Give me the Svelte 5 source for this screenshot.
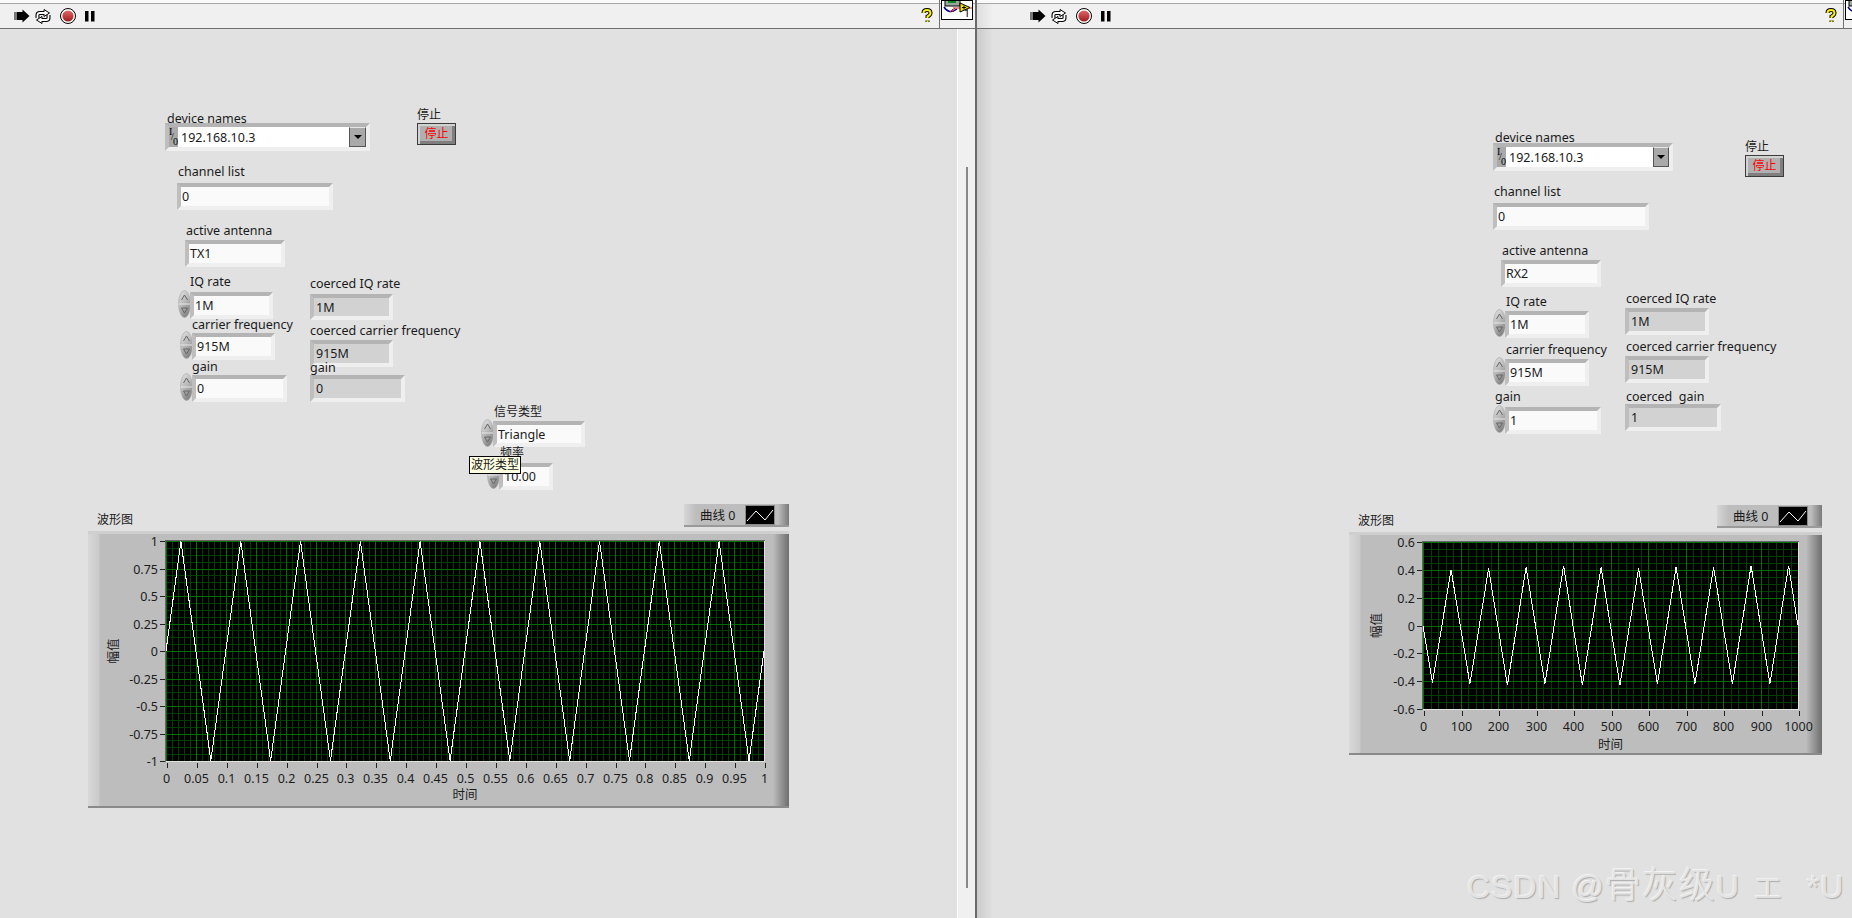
<script>
  const HEAD = 29;
  const leftOrigin = 0;
  const rightOrigin = 977;

  const leftFields = [
    { label: 'channel list', lx: 178, ly: 163, x: 177, y: 183, w: 156, h: 27, value: '0' },
    { label: 'active antenna', lx: 186, ly: 222, x: 185, y: 240, w: 100, h: 27, value: 'TX1' },
    { label: 'IQ rate', lx: 190, ly: 273, x: 190, y: 292, w: 83, h: 27, value: '1M', spin: true },
    { label: 'carrier frequency', lx: 192, ly: 316, x: 192, y: 333, w: 83, h: 27, value: '915M', spin: true },
    { label: 'gain', lx: 192, ly: 358, x: 192, y: 375, w: 95, h: 27, value: '0', spin: true },
    { label: 'coerced IQ rate', lx: 310, ly: 275, x: 310, y: 294, w: 83, h: 26, value: '1M', ind: true },
    { label: 'coerced carrier frequency', lx: 310, ly: 322, x: 310, y: 340, w: 83, h: 27, value: '915M', ind: true },
    { label: 'gain', lx: 310, ly: 359, x: 310, y: 375, w: 95, h: 27, value: '0', ind: true },
    { label: '信号类型', lx: 494, ly: 403, x: 493, y: 421, w: 92, h: 26, value: 'Triangle', spin: true },
    { label: '频率', lx: 500, ly: 444, x: 499, y: 463, w: 54, h: 27, value: '10.00', spin: true }
  ];
  const rightFields = [
    { label: 'channel list', lx: 1494, ly: 183, x: 1493, y: 203, w: 156, h: 27, value: '0' },
    { label: 'active antenna', lx: 1502, ly: 242, x: 1501, y: 260, w: 100, h: 27, value: 'RX2' },
    { label: 'IQ rate', lx: 1506, ly: 293, x: 1505, y: 311, w: 84, h: 27, value: '1M', spin: true },
    { label: 'carrier frequency', lx: 1506, ly: 341, x: 1505, y: 359, w: 84, h: 27, value: '915M', spin: true },
    { label: 'gain', lx: 1495, ly: 388, x: 1505, y: 407, w: 96, h: 27, value: '1', spin: true },
    { label: 'coerced IQ rate', lx: 1626, ly: 290, x: 1625, y: 308, w: 84, h: 27, value: '1M', ind: true },
    { label: 'coerced carrier frequency', lx: 1626, ly: 338, x: 1625, y: 356, w: 84, h: 27, value: '915M', ind: true },
    { label: 'coerced  gain', lx: 1626, ly: 388, x: 1625, y: 404, w: 96, h: 27, value: '1', ind: true }
  ];

  function isCjk(s) {
    return /[^\x00-\x7f]/.test(s);
  }
  function range(n, f) {
    return Array.from({ length: n }, (_, i) => f(i));
  }
  function leftWave() {
    const pts = [];
    for (let i = 0; i <= 200; i++) {
      const t = i / 200;
      const p = (t * 10) % 1;
      const v = p < 0.25 ? p * 4 : p < 0.75 ? 2 - p * 4 : p * 4 - 4;
      pts.push([t, v]);
    }
    return pts;
  }
  function rightWave() {
    const neg = [0.41, 0.42, 0.43, 0.42, 0.43, 0.43, 0.42, 0.42, 0.42, 0.42];
    const pos = [0.4, 0.41, 0.42, 0.43, 0.42, 0.41, 0.42, 0.42, 0.43, 0.43];
    const pts = [[0, 0]];
    for (let i = 0; i < 10; i++) {
      pts.push([(i * 100 + 25) / 1000, -neg[i]]);
      pts.push([(i * 100 + 75) / 1000, pos[i]]);
    }
    pts.push([0.999, 0.01], [1, 0.01]);
    return pts;
  }
  function fmt(v) {
    return String(Math.round(v * 100) / 100);
  }

  const leftGraph = {
    x: 88, y: 531, w: 701, h: 277,
    px: 166, py: 541, pw: 598, ph: 220,
    ymax: 1, ymin: -1,
    yTicks: range(9, (i) => fmt(1 - i * 0.25)),
    xTicks: range(21, (i) => fmt(i * 0.05)),
    yMinor: 4, xMinor: 5,
    wave: leftWave(),
    title: '波形图', tx: 97, ty: 520,
    xLabelY: 799, yLabelX: 118,
    legend: { x: 684, y: 504 }
  };
  const rightGraph = {
    x: 1349, y: 532, w: 473, h: 223,
    px: 1423, py: 542, pw: 375, ph: 167,
    ymax: 0.6, ymin: -0.6,
    yTicks: range(7, (i) => fmt(0.6 - i * 0.2)),
    xTicks: range(11, (i) => String(i * 100)),
    yMinor: 4, xMinor: 5,
    wave: rightWave(),
    title: '波形图', tx: 1358, ty: 521,
    xLabelY: 749, yLabelX: 1381,
    legend: { x: 1717, y: 505 }
  };

  function gridLines(g) {
    const minorX = [], minorY = [], majorX = [], majorY = [];
    const nx = g.xTicks.length - 1, ny = g.yTicks.length - 1;
    for (let i = 0; i <= nx * g.xMinor; i++) {
      const x = Math.round(g.px + (g.pw * i) / (nx * g.xMinor)) + 0.5;
      (i % g.xMinor === 0 ? majorX : minorX).push(x);
    }
    for (let i = 0; i <= ny * g.yMinor; i++) {
      const y = Math.round(g.py + (g.ph * i) / (ny * g.yMinor)) + 0.5;
      (i % g.yMinor === 0 ? majorY : minorY).push(y);
    }
    return { minorX, minorY, majorX, majorY };
  }
  function wavePoints(g) {
    return g.wave
      .map(([t, v]) => {
        const x = g.px + t * g.pw;
        const y = g.py + ((g.ymax - v) / (g.ymax - g.ymin)) * g.ph;
        return `${x.toFixed(1)},${y.toFixed(1)}`;
      })
      .join(' ');
  }
</script>

{#snippet runIcons()}
  <svg class="icon arrow" width="16" height="14" viewBox="0 0 16 14">
    <path d="M0 4h4M0 6h4M0 8h4M0 10h4" stroke="#000" stroke-width="1" />
    <path d="M3 3H8.500V0.500L15.500 7L8.500 13.500V11H3Z" fill="#000" />
  </svg>
  <svg class="icon cycle" width="16" height="15" viewBox="0 0 16 15">
    <g fill="none" stroke="#000" stroke-width="4">
      <path d="M2.500 9V6Q2.500 4 5 4H10" />
      <path d="M13.500 6V9Q13.500 11 11 11H6" />
    </g>
    <path d="M9 0.500L14.500 4L9 7.500Z" fill="#fff" stroke="#000" />
    <path d="M7 7.500L1.500 11L7 14.500Z" fill="#fff" stroke="#000" />
    <g fill="none" stroke="#fff" stroke-width="1.800">
      <path d="M2.500 9V6Q2.500 4 5 4H10" />
      <path d="M13.500 6V9Q13.500 11 11 11H6" />
    </g>
  </svg>
  <svg class="icon stop" width="16" height="16" viewBox="0 0 16 16">
    <defs>
      <linearGradient id="abortRed" x1="0" y1="0" x2="0" y2="1">
        <stop offset="0" stop-color="#d86a6a" />
        <stop offset="0.55" stop-color="#c03c3c" />
        <stop offset="1" stop-color="#962020" />
      </linearGradient>
    </defs>
    <circle cx="8" cy="8" r="7.500" fill="#fff" stroke="#000" />
    <circle cx="8" cy="8" r="5.600" fill="url(#abortRed)" />
  </svg>
  <svg class="icon pause" width="10" height="11" viewBox="0 0 10 11">
    <path d="M0 0h3.500v10.500H0ZM6 0h3.500v10.500H6Z" fill="#000" />
  </svg>
{/snippet}

{#snippet helpIcon()}
  <svg class="help" width="12" height="16" viewBox="0 0 12 16">
    <g fill="none" stroke="#000" stroke-width="4">
      <path d="M2.500 5Q2.500 2 6 2Q9.500 2 9.500 5Q9.500 7 6.500 8.500V10" />
      <path d="M6.500 12.500V14" />
    </g>
    <g fill="none" stroke="#f8f000" stroke-width="2">
      <path d="M2.500 5Q2.500 2 6 2Q9.500 2 9.500 5Q9.500 7 6.500 8.500V10" />
      <path d="M6.500 12.500V14" />
    </g>
  </svg>
{/snippet}

{#snippet connArt(num)}
  <svg width="30" height="18" viewBox="0 0 30 18">
    <rect x="3" y="-2" width="15" height="7" fill="#9aa79a" stroke="#000" />
    <rect x="6" y="-1" width="8" height="3" fill="#0a8a2a" />
    <path d="M2 6Q7 14 15 8" fill="none" stroke="#00008c" stroke-width="1.500" />
    <path d="M8 11L11 8M10 11L13 7" stroke="#d02020" fill="none" />
    <path d="M11 7H30" stroke="#d02020" />
    <path d="M18 2V11L28 6.500Z" fill="#f0e000" stroke="#000" />
    <path d="M20 6.500H24M22 4.500V8.500" stroke="#000" />
    {#if num}<text class="connnum" x="25" y="16" text-anchor="middle">{num}</text>{/if}
  </svg>
{/snippet}

{#snippet spinner()}
  <svg class="spin" width="13" height="28" viewBox="0 0 13 28">
    <defs>
      <linearGradient id="spinTone" x1="0" y1="0" x2="0.5" y2="1">
        <stop offset="0" stop-color="#e4e4e4" />
        <stop offset="0.5" stop-color="#bdbdbd" />
        <stop offset="1" stop-color="#858585" />
      </linearGradient>
    </defs>
    <ellipse cx="6.500" cy="14" rx="6" ry="13.500" fill="url(#spinTone)" stroke="#a8a8a8" stroke-width="0.600" />
    <path d="M0.500 14H12.500" stroke="#e8e8e8" />
    <path d="M6.500 5L3.500 10M6.500 5L9.500 10" stroke="#666" fill="none" />
    <path d="M3.500 18H9.500L6.500 23Z" stroke="#666" fill="none" />
  </svg>
{/snippet}

{#snippet field(f, ox)}
  <span class="label" class:cjk={isCjk(f.label)} style="left:{f.lx - ox}px;top:{f.ly - HEAD}px">{f.label}</span>
  {#if f.spin}
    <span class="spinwrap" style="left:{f.x - ox - 12}px;top:{f.y - HEAD - 2}px">{@render spinner()}</span>
  {/if}
  <div class="field" class:ind={f.ind} style="left:{f.x - ox}px;top:{f.y - HEAD}px;width:{f.w}px;height:{f.h}px">{f.value}</div>
{/snippet}

{#snippet ring(x, y, w, arrowW, ox)}
  <div class="ring" style="left:{x - ox}px;top:{y - HEAD}px;width:{w}px">
    <span class="radix"><i class="ri">I</i><i class="rs">/</i><i class="ro">0</i></span>
    <span class="ringval">192.168.10.3</span>
    <span class="ringbtn" style="width:{arrowW}px"></span>
  </div>
{/snippet}

{#snippet stopBtn(x, y, ox)}
  <span class="label cjk" style="left:{x - ox}px;top:{y - 17 - HEAD}px">停止</span>
  <div class="stopbtn" style="left:{x - ox}px;top:{y - HEAD}px">停止</div>
{/snippet}

{#snippet graph(g, ox)}
  {@const lines = gridLines(g)}
  <span class="label cjk" style="left:{g.tx - ox}px;top:{g.ty - 9 - HEAD}px">{g.title}</span>
  <div class="legend" style="left:{g.legend.x - ox}px;top:{g.legend.y - HEAD}px">
    <span class="legendname">曲线 0</span>
    <svg class="swatch" width="28" height="18" viewBox="0 0 28 18">
      <rect width="28" height="18" fill="#000" />
      <path d="M1 15L10 5L19 14L27 4" fill="none" stroke="#fff" />
    </svg>
  </div>
  <div class="frame" style="left:{g.x - ox}px;top:{g.y - HEAD}px;width:{g.w}px;height:{g.h}px">
    <svg class="chart" width={g.w} height={g.h} viewBox="{g.x} {g.y} {g.w} {g.h}">
      <rect x={g.px} y={g.py} width={g.pw} height={g.ph} fill="#000" />
      <g stroke="#003f00" shape-rendering="crispEdges">
        {#each lines.minorX as x}<line x1={x} x2={x} y1={g.py} y2={g.py + g.ph} />{/each}
        {#each lines.minorY as y}<line x1={g.px} x2={g.px + g.pw} y1={y} y2={y} />{/each}
      </g>
      <g stroke="#006e00" shape-rendering="crispEdges">
        {#each lines.majorX as x}<line x1={x} x2={x} y1={g.py} y2={g.py + g.ph} />{/each}
        {#each lines.majorY as y}<line x1={g.px} x2={g.px + g.pw} y1={y} y2={y} />{/each}
      </g>
      <polyline points={wavePoints(g)} fill="none" stroke="#fff" stroke-width="1" shape-rendering="crispEdges" />
      <path d="M{g.px - 0.5} {g.py + g.ph + 0.5}V{g.py - 0.5}H{g.px + g.pw + 0.5}" fill="none" stroke="#666" shape-rendering="crispEdges" />
      <path d="M{g.px + g.pw + 0.5} {g.py}V{g.py + g.ph + 0.5}H{g.px}" fill="none" stroke="#e2e2e2" shape-rendering="crispEdges" />
      {#each g.yTicks as t, i}
        {@const y = Math.round(g.py + (g.ph * i) / (g.yTicks.length - 1)) + 0.5}
        <line x1={g.px - 6} x2={g.px - 1} y1={y} y2={y} stroke="#222" shape-rendering="crispEdges" />
        <text class="tick" x={g.px - 8} y={y + 4.500} text-anchor="end">{t}</text>
      {/each}
      {#each g.xTicks as t, i}
        {@const x = Math.round(g.px + (g.pw * i) / (g.xTicks.length - 1)) + 1.5}
        <line x1={x} x2={x} y1={g.py + g.ph + 2} y2={g.py + g.ph + 7} stroke="#222" shape-rendering="crispEdges" />
        <text class="tick" x={x - 1} y={g.py + g.ph + 22} text-anchor="middle">{t}</text>
      {/each}
      <text class="tick" x={g.px + g.pw / 2} y={g.xLabelY} text-anchor="middle">时间</text>
      <text class="tick" transform="translate({g.yLabelX} {g.py + g.ph / 2}) rotate(-90)" text-anchor="middle">幅值</text>
    </svg>
  </div>
{/snippet}

<div class="app">
  <section class="pane left">
    <div class="strip"></div>
    <header class="toolbar">
      <div class="tools">{@render runIcons()}</div>
      <div class="side">
        {@render helpIcon()}
        <span class="sep"></span>
        <div class="conn">{@render connArt('1')}</div>
      </div>
    </header>
    <main class="canvas">
      {@render ring(165, 123, 205, 17, leftOrigin)}
      <span class="label" style="left:167px;top:{110 - HEAD}px">device names</span>
      {@render stopBtn(417, 123, leftOrigin)}
      {#each leftFields as f}{@render field(f, leftOrigin)}{/each}
      {@render graph(leftGraph, leftOrigin)}
      <div class="tooltip">波形类型</div>
      <div class="scrollbar"><span class="thumb"></span></div>
    </main>
  </section>

  <div class="divider"></div>

  <section class="pane right">
    <div class="strip"></div>
    <header class="toolbar">
      <div class="tools">{@render runIcons()}</div>
      <div class="side">
        {@render helpIcon()}
        <span class="sep"></span>
        <div class="conn">{@render connArt('')}</div>
      </div>
    </header>
    <main class="canvas">
      {@render ring(1493, 143, 180, 16, rightOrigin)}
      <span class="label" style="left:{1495 - rightOrigin}px;top:{129 - HEAD}px">device names</span>
      {@render stopBtn(1745, 155, rightOrigin)}
      {#each rightFields as f}{@render field(f, rightOrigin)}{/each}
      {@render graph(rightGraph, rightOrigin)}
      <div class="watermark">CSDN @<span class="wmcjk">骨灰级</span>U <span class="wmcjk">ェ</span>{'  '}*U</div>
    </main>
  </section>
</div>

<style>
  :global(body) {
    margin: 0;
    background: #e1e1e1;
  }
  .app {
    display: flex;
    width: 1852px;
    height: 918px;
    overflow: hidden;
    font-family: "Noto Sans", "Noto Sans CJK SC", sans-serif;
    font-size: 12.5px;
    color: #1a1a1a;
  }
  .pane {
    display: flex;
    flex-direction: column;
    min-width: 0;
  }
  .left {
    width: 975px;
  }
  .right {
    flex: 1;
  }
  .divider {
    width: 2px;
    background: #6a6a6a;
  }
  .strip {
    height: 3px;
    background: #fafafa;
    border-bottom: 1px solid #a8a8a8;
    box-sizing: content-box;
  }
  .toolbar {
    height: 24px;
    display: flex;
    justify-content: space-between;
    background: #f0f0f0;
    border-bottom: 1px solid #707070;
  }
  .right .toolbar {
    background: linear-gradient(90deg, #dedede 0, #f0f0f0 16px);
  }
  .tools {
    display: flex;
    align-items: center;
    gap: 6px;
    padding-left: 14px;
  }
  .right .tools {
    padding-left: 53px;
  }
  .arrow {
    margin-right: -1px;
  }
  .stop {
    margin-left: 3px;
  }
  .pause {
    margin-left: 3px;
  }
  .side {
    display: flex;
    align-items: flex-start;
    margin-right: 2px;
  }
  .right .side {
    margin-right: -25px;
  }
  .help {
    margin-top: 4px;
    margin-right: 6px;
  }
  .sep {
    width: 1px;
    height: 28px;
    margin-top: -4px;
    margin-right: 1px;
    background: #707070;
    position: relative;
    z-index: 2;
  }
  .conn {
    width: 32px;
    height: 20px;
    box-sizing: border-box;
    margin-top: -4px;
    background: #fff;
    border: 1px solid #000;
    position: relative;
    z-index: 2;
    overflow: hidden;
    line-height: 0;
    flex: none;
  }
  .canvas {
    position: relative;
    flex: 1;
    background: #e1e1e1;
    overflow: hidden;
  }
  .right .canvas {
    background: linear-gradient(90deg, #cbcbcb 0, #e1e1e1 16px);
  }
  .label {
    position: absolute;
    white-space: pre;
    line-height: 18px;
  }
  .label.cjk {
    font-size: 12px;
  }
  .field {
    position: absolute;
    box-sizing: border-box;
    background: #fafafa;
    border: 4px solid;
    border-color: #b4b4b4 #efefef #efefef #bebebe;
    padding-left: 1px;
    line-height: 19px;
    white-space: nowrap;
    overflow: hidden;
  }
  .field.ind {
    background: #d2d2d2;
    padding-left: 2px;
  }
  .spinwrap {
    position: absolute;
    line-height: 0;
  }
  .ring {
    position: absolute;
    box-sizing: border-box;
    height: 28px;
    display: flex;
    background: #fff;
    border: 4px solid;
    border-color: #b4b4b4 #efefef #efefef #bebebe;
  }
  .radix {
    width: 9px;
    background: #a9a9a9;
    position: relative;
    font-family: "Liberation Serif", serif;
    font-size: 10px;
    flex: none;
  }
  .radix i {
    position: absolute;
    font-style: normal;
    line-height: 9px;
    color: #000;
  }
  .ri {
    left: 0;
    top: 0;
  }
  .rs {
    left: 2px;
    top: 5px;
  }
  .ro {
    left: 4px;
    top: 10px;
  }
  .ringval {
    flex: 1;
    padding-left: 3px;
    line-height: 21px;
  }
  .ringbtn {
    flex: none;
    box-sizing: border-box;
    background: #a9a9a9;
    border: 1px solid #555;
    border-color: #e6e6e6 #555 #555 #555;
    display: flex;
    align-items: center;
    justify-content: center;
  }
  .ringbtn::after {
    content: "";
    border: 4px solid transparent;
    border-top-color: #000;
    border-bottom: 0;
  }
  .stopbtn {
    position: absolute;
    box-sizing: border-box;
    width: 39px;
    height: 22px;
    border: 1px solid #3c3c3c;
    background: #b0b0b0;
    box-shadow: inset 2px 2px 0 #d2d2d2, inset -3px -3px 0 #7e7e7e;
    color: #ff0000;
    text-align: center;
    line-height: 20px;
    font-size: 12px;
  }
  .legend {
    position: absolute;
    box-sizing: border-box;
    width: 105px;
    height: 23px;
    display: flex;
    align-items: center;
    background: linear-gradient(90deg, #d6d6d6 0, #bdbdbd 12px, #bdbdbd 94px, #7a7a7a 100%);
    border-bottom: 2px solid #9a9a9a;
  }
  .legendname {
    margin-left: 16px;
    width: 46px;
    flex: none;
  }
  .swatch {
    outline: 1px solid #8a8a8a;
  }
  .frame {
    position: absolute;
    box-sizing: border-box;
    background:
      linear-gradient(90deg, #d8d8d8 0, #cacaca 11px, #bdbdbd 12px, #bdbdbd calc(100% - 16px), #6e6e6e 100%);
    border-top: 3px solid #cfcfcf;
    border-bottom: 2px solid #8a8a8a;
  }
  .chart {
    display: block;
    margin-top: -3px;
  }
  .tick {
    font-family: "Noto Sans", "Noto Sans CJK SC", sans-serif;
    font-size: 12.5px;
    fill: #1c1c1c;
  }
  .connnum {
    font-family: "Noto Sans", sans-serif;
    font-size: 11px;
    fill: #000;
  }
  .tooltip {
    position: absolute;
    left: 469px;
    top: 427px;
    box-sizing: border-box;
    width: 52px;
    height: 18px;
    background: #ffffe1;
    border: 1px solid #000;
    line-height: 16px;
    padding-left: 1px;
    z-index: 3;
    white-space: nowrap;
    font-size: 12px;
  }
  .scrollbar {
    position: absolute;
    left: 957px;
    top: 0;
    bottom: 0;
    width: 18px;
    background: #f0f0f0;
    border-left: 1px solid #fff;
    box-sizing: border-box;
  }
  .thumb {
    position: absolute;
    left: 8px;
    top: 138px;
    width: 2px;
    height: 721px;
    background: #888;
  }
  .watermark {
    position: absolute;
    left: 490px;
    top: 839px;
    font-family: "Liberation Sans", "Noto Sans CJK SC", sans-serif;
    font-size: 32px;
    letter-spacing: 1px;
    line-height: 36px;
    white-space: pre;
    color: #e3e3e3;
    text-shadow: -1px -1px 0 #f2f2f2, 1px 1px 1px #acacac;
  }
  .wmcjk {
    font-size: 36px;
    font-weight: 300;
  }
</style>
